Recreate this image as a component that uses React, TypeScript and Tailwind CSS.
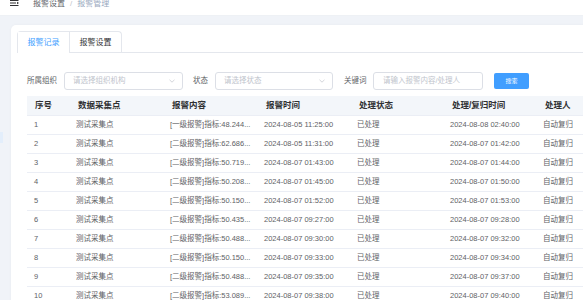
import React from "react";

const rows = [
  ["1", "[一级报警]指标:48.244...", "2024-08-05 11:25:00", "2024-08-08 02:40:00"],
  ["2", "[二级报警]指标:62.686...", "2024-08-05 11:31:00", "2024-08-07 01:42:00"],
  ["3", "[二级报警]指标:50.719...", "2024-08-07 01:43:00", "2024-08-07 01:44:00"],
  ["4", "[二级报警]指标:50.208...", "2024-08-07 01:45:00", "2024-08-07 01:50:00"],
  ["5", "[二级报警]指标:50.150...", "2024-08-07 01:52:00", "2024-08-07 01:53:00"],
  ["6", "[二级报警]指标:50.435...", "2024-08-07 09:27:00", "2024-08-07 09:28:00"],
  ["7", "[二级报警]指标:50.488...", "2024-08-07 09:30:00", "2024-08-07 09:32:00"],
  ["8", "[二级报警]指标:50.150...", "2024-08-07 09:33:00", "2024-08-07 09:34:00"],
  ["9", "[二级报警]指标:50.488...", "2024-08-07 09:35:00", "2024-08-07 09:37:00"],
  ["10", "[二级报警]指标:53.089...", "2024-08-07 09:38:00", "2024-08-07 09:40:00"],
];

const headers = ["序号", "数据采集点", "报警内容", "报警时间", "处理状态", "处理/复归时间", "处理人"];

function Chevron() {
  return (
    <svg width="6" height="4" viewBox="0 0 6 4" className="shrink-0">
      <path d="M0.5 0.8 L3 3.2 L5.5 0.8" fill="none" stroke="#c0c4cc" strokeWidth="0.7" />
    </svg>
  );
}

const grid = "grid grid-cols-[41px_94px_94px_93px_93px_93px_93px]";

export default function App() {
  return (
    <div
      className="w-[583px] h-[300px] overflow-hidden bg-[#f0f3f8]"
      style={{ fontFamily: '"Liberation Sans", "Noto Sans CJK SC", sans-serif' }}
    >
      <header className="h-[16px] bg-white flex items-start pl-[10px] border-b border-[#eef1f5] overflow-hidden">
        <svg width="10" height="8" viewBox="0 0 10 8" className="-mt-[1px]">
          <rect x="0" y="1" width="8.5" height="1" fill="#303133" />
          <rect x="0" y="3.5" width="6" height="1" fill="#303133" />
          <path d="M7 2.8 L9 4 L7 5.2 Z" fill="#303133" />
          <rect x="0" y="6" width="8.5" height="1" fill="#303133" />
        </svg>
        <div className="ml-[13px] -mt-[2px] text-[8px] leading-[12px] flex items-center">
          <span className="text-[#5a5e66]">报警设置</span>
          <span className="text-[#c0c4cc] mx-[5px]">/</span>
          <span className="text-[#97a8be]">报警管理</span>
        </div>
      </header>

      <div className="flex">
        <div className="w-[11px] shrink-0 relative">
          <div className="absolute left-0 top-[116px] w-[3px] h-[11px] bg-[#e3eefb]" />
        </div>
        <div className="mt-[9px] w-[620px] shrink-0 bg-white rounded-[5px] pl-[6px] pt-[6px] shadow-[0_0_3px_rgba(0,0,0,0.04)]">
          {/* tabs */}
          <div className="flex border-b border-[#e4e7ed] h-[22px]">
            <div className="flex border border-b-0 border-[#e4e7ed] rounded-t-[4px] h-[22px]">
              <div className="w-[51px] h-[22px] flex items-center justify-center text-[8px] text-[#409eff] bg-white border-b border-white">
                报警记录
              </div>
              <div className="w-[52px] h-[21px] flex items-center justify-center text-[8px] text-[#303133] border-l border-[#e4e7ed]">
                报警设置
              </div>
            </div>
          </div>

          <div className="pl-[10px]">
            {/* filters */}
            <div className="flex items-center mt-[19px] h-[18px] text-[7.5px]">
              <span className="text-[#606266] w-[37px]">所属组织</span>
              <div className="w-[119px] h-[18px] border border-[#dcdfe6] rounded-[3px] flex items-center justify-between pl-[8px] pr-[7px]">
                <span className="text-[#c0c4cc]">请选择组织机构</span>
                <Chevron />
              </div>
              <span className="text-[#606266] ml-[10px] w-[22px]">状态</span>
              <div className="w-[118px] h-[18px] border border-[#dcdfe6] rounded-[3px] flex items-center justify-between pl-[8px] pr-[7px]">
                <span className="text-[#c0c4cc]">请选择状态</span>
                <Chevron />
              </div>
              <span className="text-[#606266] ml-[11px] w-[29px]">关键词</span>
              <div className="w-[110px] h-[18px] border border-[#dcdfe6] rounded-[3px] flex items-center pl-[9px]">
                <span className="text-[#c0c4cc]">请输入报警内容/处理人</span>
              </div>
              <button className="ml-[11px] w-[35px] h-[16px] bg-[#409eff] rounded-[2px] text-white text-[6px] flex items-center justify-center">
                搜索
              </button>
            </div>

            {/* table */}
            <div className="mt-[6px]">
              <div className={`${grid} h-[20px] bg-[#f3f6fa] border-b border-[#ebeef5] items-center text-[8.5px] font-bold text-[#303133]`}>
                {headers.map((h, i) => (
                  <div key={h} className={`${i === 0 ? "pl-[8px]" : "pl-[10px]"} whitespace-nowrap`}>
                    {h}
                  </div>
                ))}
              </div>
              {rows.map((r) => (
                <div
                  key={r[0]}
                  className={`${grid} h-[19px] border-b border-[#ebeef5] items-center text-[7.5px] text-[#606266]`}
                >
                  <div className="pl-[7px]">{r[0]}</div>
                  <div className="pl-[8px] whitespace-nowrap">测试采集点</div>
                  <div className="pl-[8px] whitespace-nowrap overflow-hidden">{r[1]}</div>
                  <div className="pl-[8px] whitespace-nowrap">{r[2]}</div>
                  <div className="pl-[8px] whitespace-nowrap">已处理</div>
                  <div className="pl-[8px] whitespace-nowrap">{r[3]}</div>
                  <div className="pl-[8px] whitespace-nowrap">自动复归</div>
                </div>
              ))}
            </div>
          </div>
        </div>
      </div>
    </div>
  );
}
